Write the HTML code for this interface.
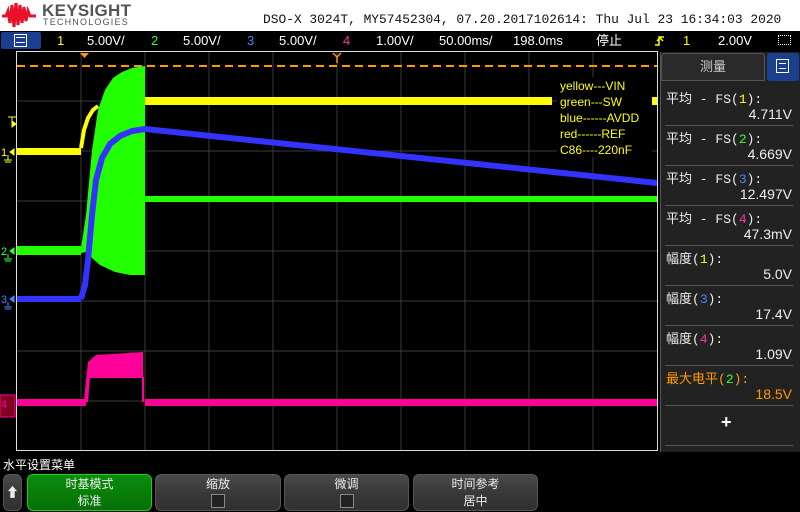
<!DOCTYPE html>
<html><head><meta charset="utf-8"><style>
*{margin:0;padding:0;box-sizing:border-box}
body{width:800px;height:512px;background:#000;position:relative;overflow:hidden;font-family:"Liberation Sans","Noto Sans CJK SC",sans-serif;color:#fff}
.a{position:absolute;white-space:nowrap}
.m{font-family:"Liberation Mono","Noto Sans CJK SC",monospace}
.row{position:absolute;left:666px;font-size:13px;color:#eee;font-family:"Liberation Mono","Noto Sans CJK SC",monospace}
.val{position:absolute;right:8px;font-size:14px;color:#eee}
.sep{position:absolute;left:665px;width:128px;height:1px;background:#555}
.btn{position:absolute;top:474px;height:37px;border-radius:6px;background:linear-gradient(#4a4a4a,#3a3a3a 45%,#303030);border:1px solid #555;font-size:12px;text-align:center;color:#eee}
.cb{display:block;margin:2px auto 0;width:14px;height:14px;border:1px solid #888;background:#222}
</style></head><body>
<div class="a" style="left:0;top:0;width:800px;height:31px;background:#fff"></div>
<svg class="a" style="left:2px;top:1px" width="36" height="28" viewBox="0 0 36 28"><path d="M0 15 L4 15 L6 10 L8 22 L10 4 L12 26 L14 2 L16 24 L18 4 L20 22 L22 6 L24 20 L26 10 L28 15 L34 15" stroke="#e8102a" stroke-width="3" fill="none"/></svg>
<div class="a" style="left:42px;top:1px;font-size:17px;font-weight:bold;color:#555;letter-spacing:0.3px">KEYSIGHT</div>
<div class="a" style="left:43px;top:17px;font-size:9px;color:#555;letter-spacing:1.2px">TECHNOLOGIES</div>
<div class="a m" style="left:263px;top:12px;font-size:12.9px;color:#111">DSO-X 3024T, MY57452304, 07.20.2017102614: Thu Jul 23 16:34:03 2020</div>
<!-- status bar -->
<div class="a" style="left:1px;top:32px;width:40px;height:17px;background:#1a3f8f;border-radius:2px"></div>
<div class="a" style="left:14px;top:34px;width:13px;height:13px;border:1px solid #fff"></div>
<div class="a" style="left:16px;top:37px;width:9px;height:6px;border-top:1px solid #fff;border-bottom:1px solid #fff"></div>
<div class="a" style="left:0;top:31px;width:800px;height:20px;font-size:13px;line-height:20px">
<span class="a" style="left:57px;color:#ff0">1</span><span class="a" style="left:87px">5.00V/</span>
<span class="a" style="left:151px;color:#3f3">2</span><span class="a" style="left:183px">5.00V/</span>
<span class="a" style="left:247px;color:#48f">3</span><span class="a" style="left:279px">5.00V/</span>
<span class="a" style="left:343px;color:#f3a">4</span><span class="a" style="left:376px">1.00V/</span>
<span class="a" style="left:439px">50.00ms/</span><span class="a" style="left:513px">198.0ms</span>
<span class="a" style="left:596px">停止</span>
<span class="a" style="left:683px;color:#ff0">1</span>
<span class="a" style="left:718px">2.00V</span>
</div>
<svg class="a" style="left:654px;top:35px" width="12" height="12"><path d="M1 10h4V2h5M3 6l3-3 3 3" stroke="#ff0" fill="none" stroke-width="1.5"/></svg>
<div class="a" style="left:778px;top:35px;width:13px;height:10px;border:1px dotted #fff"></div>
<!-- plot -->
<svg class="a" style="left:0;top:51px" width="660" height="400" viewBox="0 51 660 400">
<g stroke="#3a3a3a" stroke-width="1">
<path d="M81 51V451M145 51V451M209 51V451M273 51V451M337 51V451M401 51V451M465 51V451M529 51V451M593 51V451M17 101H657M17 151H657M17 201H657M17 251H657M17 301H657M17 351H657M17 401H657"/>
</g>
<rect x="16.5" y="51.5" width="641" height="399" fill="none" stroke="#ddd"/>
<path d="M17 66H657" stroke="#f90" stroke-width="2" stroke-dasharray="8,5"/>
<path d="M80 53h9l-4.5 5z" fill="#f90"/>
<path d="M333 53l4 4 4-4M337 57v6" stroke="#f90" fill="none" stroke-width="1.5"/>
<path d="M81 248 L86 215 L92 150 L98 110 L105 90 L113 78 L122 72 L132 68 L145 66 L145 275 L130 275 L115 272 L100 265 L92 258 L86 252 L81 253Z" fill="#2f0"/>
<rect x="17" y="246" width="64" height="9" fill="#2f0"/>
<rect x="145" y="196" width="512" height="6" fill="#2f0"/>
<rect x="17" y="148" width="64" height="7" fill="#ff0"/>
<path d="M81 148 L84 130 L88 118 L93 110 L98 106" stroke="#ff0" stroke-width="4" fill="none"/>
<rect x="145" y="97" width="407" height="8" fill="#ff0"/>
<rect x="652" y="97" width="5" height="8" fill="#ff0"/>
<rect x="17" y="296" width="64" height="6" fill="#33f"/>
<path d="M81 299 L85 285 L88 260 L92 215 L96 180 L102 158 L110 144 L120 136 L132 131 L145 129 L657 183" stroke="#33f" stroke-width="6" fill="none"/>
<rect x="557" y="77" width="95" height="80" fill="#000"/>
<g fill="#ff0" font-family="Liberation Sans,sans-serif" font-size="12">
<text x="560" y="90">yellow---VIN</text><text x="560" y="106">green---SW</text><text x="560" y="122">blue------AVDD</text><text x="560" y="138">red------REF</text><text x="560" y="154">C86----220nF</text>
</g>
<rect x="17" y="399" width="69" height="7" fill="#f09"/>
<path d="M84 402 L86 380 L88 362 L96 355 L143 352 L143 378 L90 378 L88 402Z" fill="#f09"/>
<rect x="145" y="399" width="512" height="7" fill="#f09"/>
<path d="M143 377V402" stroke="#f09" stroke-width="2"/>
<g font-family="Liberation Sans,sans-serif" font-size="11">
<path d="M8 117h8M12 117v7M12 121l4 3-4 3z" stroke="#ff0" fill="#ff0" stroke-width="1"/>
<text x="1" y="156" fill="#ff0">1</text><path d="M10 152l4 -3 0 6z M8 155v5M4 160h8M5 162h6" stroke="#ff0" fill="#ff0"/>
<text x="1" y="255" fill="#3f3">2</text><path d="M10 251l4 -3 0 6z M8 254v5M4 259h8M5 261h6" stroke="#3f3" fill="#3f3"/>
<text x="1" y="303" fill="#48f">3</text><path d="M10 299l4 -3 0 6z M8 302v5M4 307h8M5 309h6" stroke="#48f" fill="#48f"/>
<rect x="0" y="395" width="15" height="22" fill="#800020" stroke="#f09"/>
<text x="1" y="408" fill="#f09">4</text>
</g>
</svg>
<!-- right panel -->
<div class="a" style="left:660px;top:52px;width:140px;height:400px;background:#222;border-left:1px solid #555"></div>
<div class="a" style="left:661px;top:53px;width:104px;height:28px;background:#2a2a2a;border:1px solid #555;border-radius:4px 4px 0 0;text-align:center;font-size:13px;line-height:26px;color:#ccc">测量</div>
<div class="a" style="left:767px;top:53px;width:32px;height:28px;background:#1a3f8f;border-radius:3px"></div>
<div class="a" style="left:776px;top:59px;width:13px;height:14px;border:1px solid #fff"></div>
<div class="a" style="left:779px;top:63px;width:7px;height:6px;border-top:1px solid #fff;border-bottom:1px solid #fff"></div>
<div class="row" style="top:88px">平均 - FS(<span style="color:#ff0">1</span>):</div><div class="val" style="top:106px">4.711V</div>
<div class="sep" style="top:125px"></div>
<div class="row" style="top:128px">平均 - FS(<span style="color:#3f3">2</span>):</div><div class="val" style="top:146px">4.669V</div>
<div class="sep" style="top:165px"></div>
<div class="row" style="top:168px">平均 - FS(<span style="color:#48f">3</span>):</div><div class="val" style="top:186px">12.497V</div>
<div class="sep" style="top:205px"></div>
<div class="row" style="top:208px">平均 - FS(<span style="color:#f3a">4</span>):</div><div class="val" style="top:226px">47.3mV</div>
<div class="sep" style="top:245px"></div>
<div class="row" style="top:248px">幅度(<span style="color:#ff0">1</span>):</div><div class="val" style="top:266px">5.0V</div>
<div class="sep" style="top:285px"></div>
<div class="row" style="top:288px">幅度(<span style="color:#48f">3</span>):</div><div class="val" style="top:306px">17.4V</div>
<div class="sep" style="top:325px"></div>
<div class="row" style="top:328px">幅度(<span style="color:#f3a">4</span>):</div><div class="val" style="top:346px">1.09V</div>
<div class="sep" style="top:365px"></div>
<div class="row" style="top:368px;color:#f90">最大电平(<span style="color:#3f3">2</span>):</div><div class="val" style="top:386px;color:#f90">18.5V</div>
<div class="sep" style="top:405px"></div>
<div class="a" style="left:721px;top:412px;font-size:18px;font-weight:bold">+</div>
<div class="sep" style="top:445px"></div>
<!-- bottom -->
<div class="a" style="left:3px;top:456px;font-size:12px">水平设置菜单</div>
<div class="btn" style="left:3px;width:19px;font-size:13px;line-height:35px">⬆</div>
<div class="btn" style="left:27px;width:125px;background:linear-gradient(#0b8c0b,#067006);border-color:#2c2">时基模式<br>标准</div>
<div class="btn" style="left:155px;width:126px">缩放<span class="cb"></span></div>
<div class="btn" style="left:284px;width:125px">微调<span class="cb"></span></div>
<div class="btn" style="left:413px;width:125px">时间参考<br>居中</div>
</body></html>
